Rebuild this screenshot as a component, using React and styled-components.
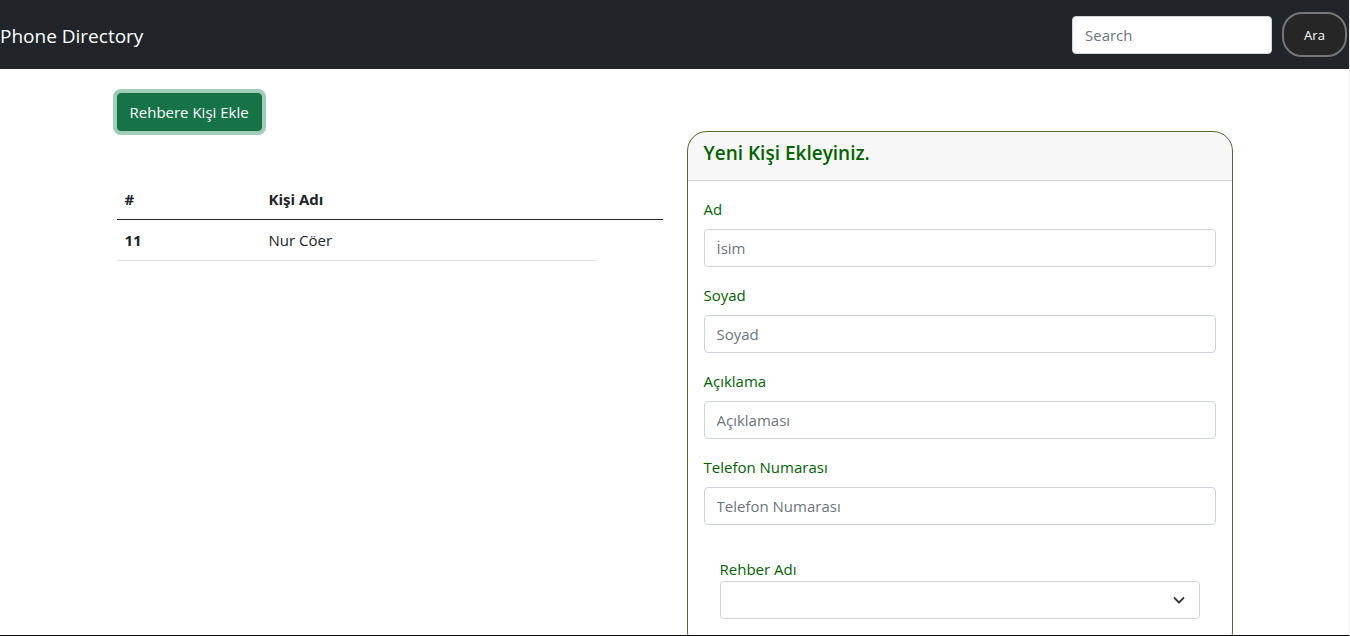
import React from "react";
import styled, { createGlobalStyle } from "styled-components";

const GlobalStyle = createGlobalStyle`
  *, *::before, *::after { box-sizing: border-box; }
  body {
    margin: 0;
    background: #fff;
    color: #212529;
    font-family: "Segoe UI", "Open Sans", "Noto Sans", sans-serif;
    font-size: 15px;
    line-height: 24px;
  }
  button, input, select { font: inherit; }
`;

const Page = styled.div`
  height: 100vh;
  overflow-y: auto;
  scrollbar-width: none;
  border-right: 1px solid #f1f1f1;
  border-bottom: 1px solid #0c0c0c;
`;

const Navbar = styled.nav`
  display: flex;
  align-items: center;
  justify-content: space-between;
  padding: 12px 2px 12px 0;
  background: #212529;
`;

const Brand = styled.a`
  padding-top: 2px;
  color: #fff;
  font-size: 19px;
  line-height: 30px;
  text-decoration: none;
`;

const SearchForm = styled.form`
  display: flex;
  align-items: center;
  gap: 10px;
`;

const TextInput = styled.input`
  display: block;
  width: ${(p) => p.$width || "100%"};
  height: 38px;
  padding: 6px 12px;
  border: 1px solid #ced4da;
  border-radius: 4px;
  background: #fff;
  color: #212529;
  &::placeholder { color: #6c757d; opacity: 1; }
`;

const SearchButton = styled.button`
  width: 65px;
  height: 45px;
  padding: 0;
  border: 2px solid #767676;
  border-radius: 20px;
  background: #262626;
  color: #fff;
  font-size: 13px;
`;

const Container = styled.main`
  max-width: 1140px;
  margin: 0 auto;
  padding: 24px 12px 0;
`;

const AddButton = styled.button`
  display: block;
  height: 38px;
  padding: 6px 12px;
  border: 1px solid #146c43;
  border-radius: 4px;
  background: #157347;
  color: #fff;
  box-shadow: 0 0 0 4px #9fcdb6;
`;

const Columns = styled.div`
  display: grid;
  grid-template-columns: 1fr 1fr;
  gap: 24px;
  align-items: start;
`;

const Table = styled.table`
  width: 100%;
  margin-top: 48px;
  border-spacing: 0;
  table-layout: fixed;
`;

const Cell = styled.td`
  padding: 8px;
  border-bottom: 1px solid ${(p) => (p.$head ? "#212529" : "#dee2e6")};
  font-weight: ${(p) => (p.$strong ? 700 : 400)};
  text-align: left;
`;

const Card = styled.section`
  border: 1px solid #556b2f;
  border-radius: 20px;
  color: #006400;
`;

const CardHeader = styled.header`
  padding: 8px 16px 14px;
  border-bottom: 1px solid rgba(0, 0, 0, 0.125);
  border-radius: 3px 3px 0 0;
  background: rgba(0, 0, 0, 0.03);
`;

const CardTitle = styled.h5`
  margin: 0;
  font-size: 19px;
  font-weight: 600;
  line-height: 26px;
`;

const CardBody = styled.form`
  display: flex;
  flex-direction: column;
  gap: 16px;
  padding: 16px;
`;

const Field = styled.div`
  display: flex;
  flex-direction: column;
  gap: ${(p) => (p.$inset ? 0 : 8)}px;
  padding: ${(p) => (p.$inset ? 16 : 0)}px;
`;

const SelectWrap = styled.div`
  position: relative;
`;

const Select = styled.select`
  display: block;
  appearance: none;
  width: 100%;
  height: 38px;
  padding: 6px 36px 6px 12px;
  border: 1px solid #ced4da;
  border-radius: 4px;
  background: #fff;
  color: #212529;
`;

const Chevron = styled.svg`
  position: absolute;
  top: 13px;
  right: 13px;
  width: 16px;
  height: 12px;
  pointer-events: none;
`;

const fields = [
  { id: "name", label: "Ad", placeholder: "İsim" },
  { id: "surname", label: "Soyad", placeholder: "Soyad" },
  { id: "description", label: "Açıklama", placeholder: "Açıklaması" },
  { id: "phone", label: "Telefon Numarası", placeholder: "Telefon Numarası" },
];

const people = [{ id: 11, name: "Nur Cöer" }];

export default function App() {
  return (
    <Page lang="tr">
      <GlobalStyle />
      <Navbar>
        <Brand href="#">Phone Directory</Brand>
        <SearchForm role="search">
          <TextInput type="search" placeholder="Search" aria-label="Search" $width="200px" />
          <SearchButton type="button">Ara</SearchButton>
        </SearchForm>
      </Navbar>
      <Container>
        <AddButton type="button">Rehbere Kişi Ekle</AddButton>
        <Columns>
          <Table>
            <colgroup>
              <col width="144" />
              <col />
              <col width="67" />
            </colgroup>
            <thead>
              <tr>
                <Cell as="th" scope="col" $head $strong>#</Cell>
                <Cell as="th" scope="col" $head $strong>Kişi Adı</Cell>
                <Cell as="th" $head />
              </tr>
            </thead>
            <tbody>
              {people.map((p) => (
                <tr key={p.id}>
                  <Cell as="th" scope="row" $strong>{p.id}</Cell>
                  <Cell>{p.name}</Cell>
                </tr>
              ))}
            </tbody>
          </Table>
          <Card>
            <CardHeader>
              <CardTitle>Yeni Kişi Ekleyiniz.</CardTitle>
            </CardHeader>
            <CardBody>
              {fields.map((f) => (
                <Field key={f.id}>
                  <label htmlFor={f.id}>{f.label}</label>
                  <TextInput id={f.id} type="text" placeholder={f.placeholder} />
                </Field>
              ))}
              <Field $inset>
                <label htmlFor="directory">Rehber Adı</label>
                <SelectWrap>
                  <Select id="directory" />
                  <Chevron viewBox="0 0 16 12" aria-hidden="true">
                    <path d="M3.5 4l4.5 4.5 4.5-4.5" fill="none" stroke="#343a40" strokeWidth="1.8" strokeLinecap="round" strokeLinejoin="round" />
                  </Chevron>
                </SelectWrap>
              </Field>
            </CardBody>
          </Card>
        </Columns>
      </Container>
    </Page>
  );
}
